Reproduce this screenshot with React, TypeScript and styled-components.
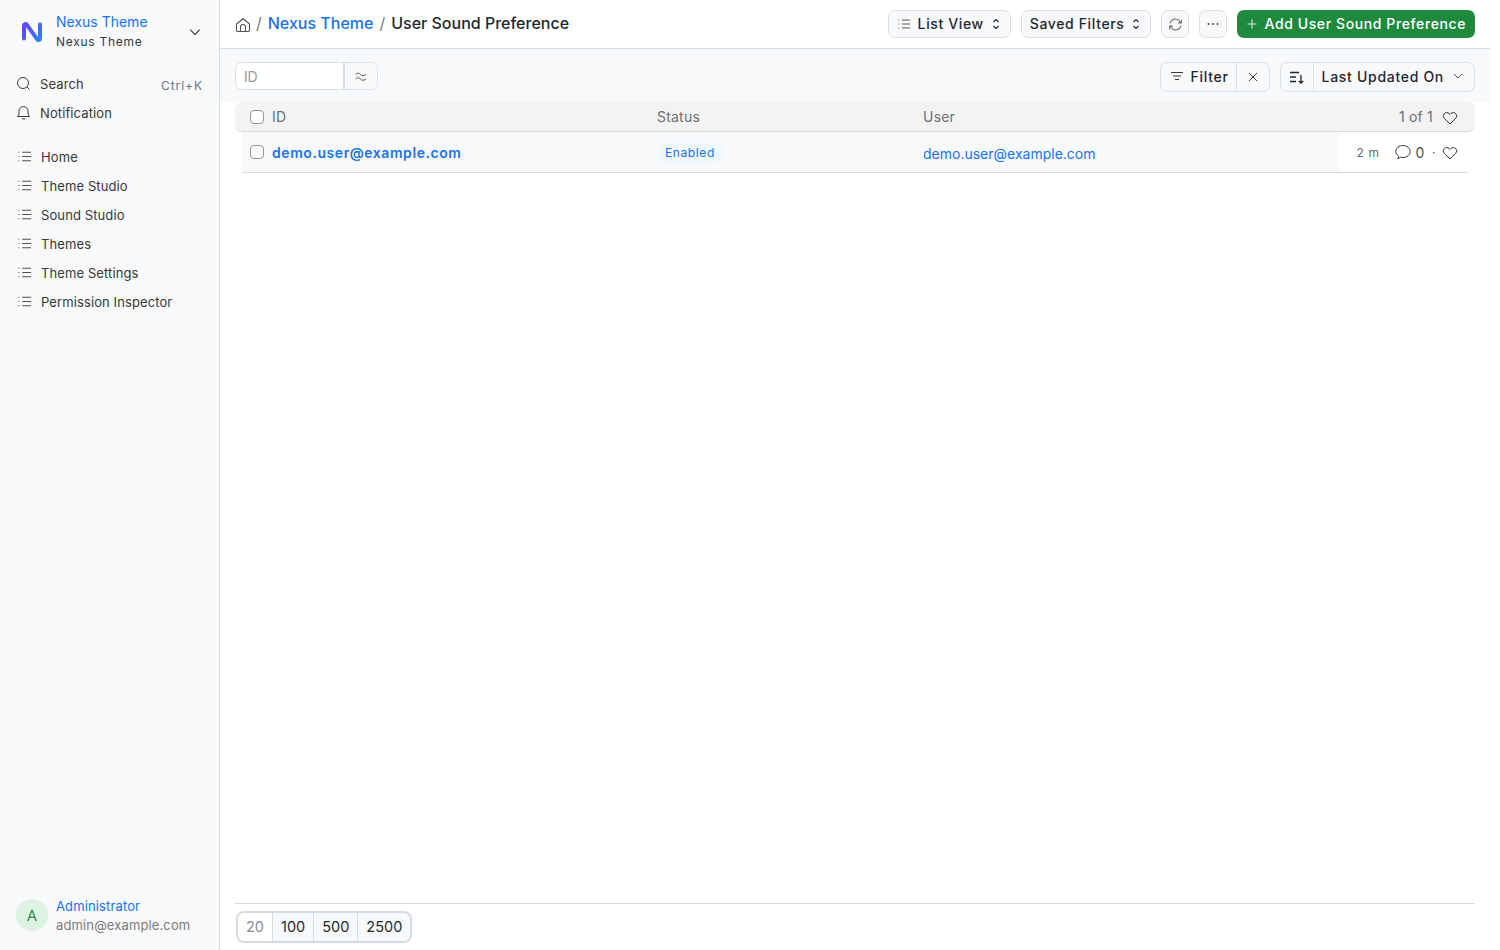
import styled, { createGlobalStyle } from "styled-components";
import { useId } from "react";

const GlobalStyle = createGlobalStyle`
  html, body {
    margin: 0;
    padding: 0;
    background: #fff;
  }
  body {
    font-family: Inter, "Liberation Sans", sans-serif;
    color: #1f272e;
  }
  * { box-sizing: border-box; }
`;

const Layout = styled.div`
  width: 1490px;
  height: 950px;
  display: flex;
  overflow: hidden;
`;

const Sidebar = styled.aside`
  width: 220px;
  flex: none;
  background: #f8f9fb;
  border-right: 1px solid #d4dbe3;
  display: flex;
  flex-direction: column;
  padding: 0 8px;
`;

const Brand = styled.div`
  height: 48px;
  margin-top: 8px;
  padding-left: 12px;
  display: flex;
  align-items: center;
  gap: 12px;
`;

const BrandText = styled.div`
  flex: 1;
  display: flex;
  flex-direction: column;
  gap: 5px;
  margin-bottom: 1px;
`;

const BrandTitle = styled.div`
  font-size: 14px;
  line-height: 16px;
  color: #1a73e8;
`;

const BrandSub = styled.div`
  font-size: 12px;
  line-height: 14px;
  color: #383838;
  letter-spacing: 0.06em;
`;

const Chevron = styled.span`
  display: flex;
  margin-right: 10px;
  color: #383838;
`;

const SideGroup = styled.nav<{ $top: number }>`
  display: flex;
  flex-direction: column;
  margin-top: ${(p) => p.$top}px;
`;

const SideItem = styled.div<{ $tight?: boolean }>`
  height: 29px;
  display: flex;
  align-items: center;
  gap: 9px;
  padding-left: ${(p) => (p.$tight ? "8px" : "9px")};
  padding-right: 8px;
  font-size: 13px;
  letter-spacing: 0.008em;
  color: #383838;
`;

const SideHint = styled.span`
  margin-left: auto;
  font-size: 12px;
  color: #6b7280;
  letter-spacing: 0.08em;
  padding-top: 3px;
`;

const SideFooter = styled.div`
  margin-top: auto;
  height: 50px;
  margin-bottom: 10px;
  display: flex;
  align-items: center;
  gap: 8px;
  padding-left: 8px;
`;

const Avatar = styled.div`
  width: 32px;
  height: 32px;
  border-radius: 50%;
  background: #dcf3e2;
  color: #2c8a5a;
  font-size: 15px;
  display: flex;
  align-items: center;
  justify-content: center;
`;

const UserName = styled.div`
  font-size: 13px;
  line-height: 16px;
  color: #1a73e8;
  letter-spacing: 0.01em;
`;

const UserMail = styled.div`
  font-size: 13px;
  line-height: 16px;
  margin-top: 3px;
  color: #7c7c7c;
  letter-spacing: 0.01em;
`;

const Main = styled.main`
  flex: 1;
  min-width: 0;
  display: flex;
  flex-direction: column;
`;

const Header = styled.header`
  height: 49px;
  flex: none;
  border-bottom: 1px solid #d4dbe3;
  padding: 0 15px;
  display: flex;
  align-items: center;
  gap: 10px;
`;

const Crumbs = styled.div`
  flex: 1;
  display: flex;
  align-items: center;
  gap: 6px;
  font-size: 16px;
  line-height: 20px;
  padding-bottom: 2px;
  font-weight: 500;
  color: #1f272e;
`;

const HomeSlot = styled.span`
  display: flex;
  margin-right: -1px;
  padding-top: 4px;
`;

const CrumbSep = styled.span`
  color: #7c7c7c;
  font-weight: 400;
`;

const CrumbLink = styled.span`
  color: #1a73e8;
`;

const HeadButton = styled.button<{ $square?: boolean }>`
  height: 28px;
  width: ${(p) => (p.$square ? "28px" : "auto")};
  padding: ${(p) => (p.$square ? "0" : "0 10px 1px 8px")};
  background: #f8f9fb;
  border: 1px solid #d9dfe6;
  border-radius: 7px;
  display: flex;
  align-items: center;
  justify-content: center;
  gap: 7px;
  font: 500 14px Inter, sans-serif;
  letter-spacing: 0.045em;
  color: #1f272e;
`;

const ArrowSlot = styled.span`
  display: flex;
  margin-left: 1px;
  padding-top: 1px;
`;

const PrimaryButton = styled.button`
  height: 28px;
  padding: 0 9px 1px;
  background: #1f8a3d;
  border: 0;
  border-radius: 7px;
  display: flex;
  align-items: center;
  gap: 6px;
  font: 500 14px Inter, sans-serif;
  letter-spacing: 0.043em;
  color: #fff;
`;

const Toolbar = styled.div`
  height: 53px;
  flex: none;
  background: #f8f9fb;
  padding: 13px 15px 0;
  display: flex;
  align-items: flex-start;
  gap: 10px;
`;

const IdField = styled.div`
  width: 143px;
  height: 28px;
  display: flex;
  background: #fff;
  border: 1px solid #d9dfe6;
  border-radius: 7px;
  overflow: hidden;
`;

const IdInput = styled.div`
  flex: 1;
  padding-left: 8px;
  line-height: 27px;
  font-size: 14px;
  letter-spacing: -0.02em;
  color: #9a9a9a;
  border-right: 2px solid #d4dbe3;
`;

const IdToggle = styled.div`
  width: 32px;
  background: #f8f9fb;
  display: flex;
  align-items: center;
  justify-content: center;
`;

const Spacer = styled.div`
  flex: 1;
`;

const Group = styled.div`
  height: 30px;
  display: flex;
  align-items: stretch;
  border: 1px solid #d9dfe6;
  border-radius: 7px;
  font-size: 14px;
  font-weight: 500;
  letter-spacing: 0.05em;
  color: #1f272e;
`;

const GroupCell = styled.div<{ $width?: number; $divided?: boolean }>`
  display: flex;
  align-items: center;
  justify-content: center;
  gap: 7px;
  padding: ${(p) => (p.$width ? "0" : "0 7px 2px 9px")};
  width: ${(p) => (p.$width ? `${p.$width}px` : "auto")};
  border-left: ${(p) => (p.$divided ? "1px solid #d9dfe6" : "0")};
`;

const SortLabel = styled(GroupCell)`
  gap: 9px;
  padding: 0 11px 2px 8px;
`;

const TableHead = styled.div`
  height: 30px;
  margin: 0 15px;
  flex: none;
  background: #f3f3f3;
  border-bottom: 1px solid #d4dbe3;
  border-radius: 7px;
  display: grid;
  grid-template-columns: 407px 266px 1fr auto;
  align-items: center;
  padding: 0 17px 0 15px;
  font-size: 14px;
  letter-spacing: 0.015em;
  color: #6f6f6f;
`;

const NameCell = styled.div`
  display: flex;
  align-items: center;
  gap: 8px;
`;

const Check = styled.span`
  width: 14px;
  height: 14px;
  flex: none;
  background: #fff;
  border: 1px solid #8d949c;
  border-radius: 4px;
`;

const TableMeta = styled.div`
  display: flex;
  align-items: center;
  gap: 9px;
`;

const HeartSlot = styled.span`
  display: flex;
  padding-top: 2px;
`;

const Row = styled.div`
  height: 41px;
  margin: 0 22px;
  flex: none;
  border-bottom: 1px solid #d4dbe3;
  display: grid;
  grid-template-columns: 407px 266px 415px 1fr;
  align-items: stretch;
  padding-left: 8px;
  background: linear-gradient(to right, #f8f9fb 1096px, #fff 1096px);
`;

const RowCell = styled.div`
  display: flex;
  align-items: center;
  gap: 8px;
`;

const RowTitle = styled.span`
  font-size: 14px;
  font-weight: 600;
  letter-spacing: 0.04em;
  color: #1a73e8;
`;

const Pill = styled.span`
  height: 20px;
  margin-top: 2px;
  padding: 0 8px;
  border-radius: 10px;
  background: #eff7fe;
  color: #1a73e8;
  font-size: 12px;
  letter-spacing: 0.05em;
  line-height: 20px;
`;

const RowLink = styled.span`
  font-size: 14px;
  color: #1a73e8;
  padding-top: 2px;
`;

const RowMeta = styled.div`
  display: flex;
  align-items: center;
  justify-content: flex-end;
  padding-right: 10px;
  font-size: 12px;
  color: #5f6b7a;
  letter-spacing: 0.05em;
`;

const Count = styled.span`
  display: flex;
  align-items: center;
  gap: 5px;
  margin-left: 15px;
  font-size: 14px;
  color: #525252;
`;

const Dot = styled.span`
  margin: 0 6px 0 7px;
  color: #525252;
`;

const Grow = styled.div`
  flex: 1;
`;

const Footer = styled.footer`
  flex: none;
  height: 47px;
  margin: 0 15px;
  border-top: 1px solid #d4dbe3;
  padding-top: 7px;
`;

const PageSizes = styled.div`
  width: fit-content;
  height: 32px;
  margin-left: 1px;
  display: flex;
  border: 2px solid #d4dbe3;
  border-radius: 8px;
  overflow: hidden;
  background: #f8f9fb;
`;

const PageSize = styled.div<{ $active?: boolean }>`
  padding: 0 8px 2px;
  display: flex;
  align-items: center;
  font-size: 14.5px;
  color: ${(p) => (p.$active ? "#8a8a8a" : "#1f272e")};
  background: ${(p) => (p.$active ? "#fff" : "transparent")};
  & + & {
    border-left: 1px solid #d4dbe3;
  }
`;

function Logo() {
  const id = useId();
  return (
    <svg width="24" height="24" viewBox="0 0 24 24" fill="none">
      <defs>
        <linearGradient id={id} x1="2" y1="4" x2="22" y2="20" gradientUnits="userSpaceOnUse">
          <stop offset="0" stopColor="#6a3df0" />
          <stop offset="1" stopColor="#2a86f5" />
        </linearGradient>
      </defs>
      <path
        d="M4 18.5V5.5c0-1.5 1.8-2 2.7-.9l10.6 14.8c.9 1.1 2.7.6 2.7-.9V4.5"
        stroke={`url(#${id})`}
        strokeWidth="4"
        strokeLinecap="round"
        strokeLinejoin="round"
      />
    </svg>
  );
}

function ListIcon({ size = 16 }: { size?: number }) {
  return (
    <svg width={size} height={size} viewBox="0 0 16 16" fill="none" stroke="#525252" strokeWidth="1.1">
      <path d="M5.5 3.5H15M5.5 8H15M5.5 12.5H15" />
      <path d="M1.5 3.5H3M1.5 8H3M1.5 12.5H3" strokeDasharray="1 .5" />
    </svg>
  );
}

function SearchIcon() {
  return (
    <svg width="15" height="15" viewBox="0 0 15 15" fill="none" stroke="#383838" strokeWidth="1">
      <circle cx="7" cy="7" r="5.5" />
      <path d="M11 11l2.5 2.5" />
    </svg>
  );
}

function BellIcon() {
  return (
    <svg width="15" height="15" viewBox="0 0 15 15" fill="none" stroke="#383838" strokeWidth="1">
      <path d="M1.5 11.5c1-1 1.5-2 1.5-3.5V6a4.5 4.5 0 0 1 9 0v2c0 1.5.5 2.5 1.5 3.5z" strokeLinejoin="round" />
      <path d="M6 13.8h3" />
    </svg>
  );
}

function ChevronDown({ size = 10, color = "#383838" }: { size?: number; color?: string }) {
  return (
    <svg width={size} height={size} viewBox="0 0 10 10" fill="none" stroke={color} strokeWidth="0.9">
      <path d="M1 3l4 4 4-4" />
    </svg>
  );
}

function UpDown() {
  return (
    <svg width="8" height="12" viewBox="0 0 8 12" fill="none" stroke="#1f272e" strokeWidth="1.2">
      <path d="M1.5 4L4 1.5 6.5 4M1.5 8L4 10.5 6.5 8" />
    </svg>
  );
}

function HomeIcon() {
  return (
    <svg width="16" height="16" viewBox="0 0 16 16" fill="none" stroke="#525252" strokeWidth="1.1">
      <path d="M1.5 7L8 1.8 14.5 7v6.2a1.3 1.3 0 0 1-1.3 1.3H2.8a1.3 1.3 0 0 1-1.3-1.3z" strokeLinejoin="round" />
      <path d="M5.5 14.5V10a2.5 2.5 0 0 1 5 0v4.5" />
    </svg>
  );
}

function RefreshIcon() {
  return (
    <svg width="15" height="15" viewBox="0 0 14 14" fill="none" stroke="#6b6b6b" strokeWidth="1">
      <path d="M2 6a5 5 0 0 1 9-2l1 1.5M12 8a5 5 0 0 1-9 2L2 8.5" />
      <path d="M12.5 2.5v3h-3M1.5 11.5v-3h3" />
    </svg>
  );
}

function DotsIcon() {
  return (
    <svg width="14" height="14" viewBox="0 0 14 14" fill="#383838">
      <circle cx="2.5" cy="7" r=".9" />
      <circle cx="7" cy="7" r=".9" />
      <circle cx="11.5" cy="7" r=".9" />
    </svg>
  );
}

function PlusIcon() {
  return (
    <svg width="12" height="12" viewBox="0 0 12 12" fill="none" stroke="#d8f0df" strokeWidth="1.1">
      <path d="M6 1.5v9M1.5 6h9" />
    </svg>
  );
}

function FilterIcon() {
  return (
    <svg width="14" height="14" viewBox="0 0 14 14" fill="none" stroke="#383838" strokeWidth="1">
      <path d="M1 3.5h12M3 7h8M5 10.5h4" />
    </svg>
  );
}

function CloseIcon() {
  return (
    <svg width="12" height="12" viewBox="0 0 12 12" fill="none" stroke="#383838" strokeWidth="1">
      <path d="M2 2l8 8M10 2l-8 8" />
    </svg>
  );
}

function SortIcon() {
  return (
    <svg width="16" height="16" viewBox="0 0 16 16" fill="none" stroke="#1f272e" strokeWidth="1.3">
      <path d="M1 3.5h9M1 8h6M1 12.5h6M12 6v8M9.8 12L12 14.2 14.2 12" />
    </svg>
  );
}

function TildeIcon() {
  return (
    <svg width="14" height="12" viewBox="0 0 14 12" fill="none" stroke="#525252" strokeWidth="1">
      <path d="M1.5 4.5c2-2 3.5-1.5 5 0s3 1.8 5.5 0M1.5 9c2-2 3.5-1.5 5 0s3 1.8 5.5 0" />
    </svg>
  );
}

function HeartIcon() {
  return (
    <svg width="16" height="16" viewBox="0 0 16 16" fill="none" stroke="#383838" strokeWidth="1">
      <path d="M8 14L2.3 8.3a3.4 3.4 0 0 1 0-4.8c1.4-1.3 3.5-1.3 4.8 0l.9.9.9-.9c1.3-1.3 3.4-1.3 4.8 0a3.4 3.4 0 0 1 0 4.8z" strokeLinejoin="round" />
    </svg>
  );
}

function CommentIcon() {
  return (
    <svg width="16" height="16" viewBox="0 0 16 16" fill="none" stroke="#383838" strokeWidth="1">
      <path d="M3.6 12.2C1.9 11 .8 9.4.8 7.5.8 4.2 4 1.5 8 1.5s7.200 2.700 7.200 6-3.200 6-7.200 6c-.8 0-1.600-.1-2.300-.3L2.800 14.800z" strokeLinejoin="round" />
    </svg>
  );
}

const navItems = [
  "Home",
  "Theme Studio",
  "Sound Studio",
  "Themes",
  "Theme Settings",
  "Permission Inspector",
];

const pageSizes = ["20", "100", "500", "2500"];

export default function App() {
  return (
    <Layout>
      <GlobalStyle />
      <Sidebar>
        <Brand>
          <Logo />
          <BrandText>
            <BrandTitle>Nexus Theme</BrandTitle>
            <BrandSub>Nexus Theme</BrandSub>
          </BrandText>
          <Chevron>
            <ChevronDown size={12} />
          </Chevron>
        </Brand>
        <SideGroup $top={13}>
          <SideItem $tight>
            <SearchIcon />
            Search
            <SideHint>Ctrl+K</SideHint>
          </SideItem>
          <SideItem $tight>
            <BellIcon />
            Notification
          </SideItem>
        </SideGroup>
        <SideGroup $top={15}>
          {navItems.map((item) => (
            <SideItem key={item}>
              <ListIcon size={15} />
              {item}
            </SideItem>
          ))}
        </SideGroup>
        <SideFooter>
          <Avatar>A</Avatar>
          <div>
            <UserName>Administrator</UserName>
            <UserMail>admin@example.com</UserMail>
          </div>
        </SideFooter>
      </Sidebar>
      <Main>
        <Header>
          <Crumbs>
            <HomeSlot>
              <HomeIcon />
            </HomeSlot>
            <CrumbSep>/</CrumbSep>
            <CrumbLink>Nexus Theme</CrumbLink>
            <CrumbSep>/</CrumbSep>
            <span>User Sound Preference</span>
          </Crumbs>
          <HeadButton>
            <ListIcon size={14} />
            List View
            <ArrowSlot>
              <UpDown />
            </ArrowSlot>
          </HeadButton>
          <HeadButton>
            Saved Filters
            <ArrowSlot>
              <UpDown />
            </ArrowSlot>
          </HeadButton>
          <HeadButton $square>
            <RefreshIcon />
          </HeadButton>
          <HeadButton $square>
            <DotsIcon />
          </HeadButton>
          <PrimaryButton>
            <PlusIcon />
            Add User Sound Preference
          </PrimaryButton>
        </Header>
        <Toolbar>
          <IdField>
            <IdInput>ID</IdInput>
            <IdToggle>
              <TildeIcon />
            </IdToggle>
          </IdField>
          <Spacer />
          <Group>
            <GroupCell>
              <FilterIcon />
              Filter
            </GroupCell>
            <GroupCell $width={33} $divided>
              <CloseIcon />
            </GroupCell>
          </Group>
          <Group>
            <GroupCell $width={32}>
              <SortIcon />
            </GroupCell>
            <SortLabel $divided>
              Last Updated On
              <ChevronDown />
            </SortLabel>
          </Group>
        </Toolbar>
        <TableHead>
          <NameCell>
            <Check />
            ID
          </NameCell>
          <div>Status</div>
          <div>User</div>
          <TableMeta>
            1 of 1
            <HeartSlot>
              <HeartIcon />
            </HeartSlot>
          </TableMeta>
        </TableHead>
        <Row>
          <RowCell>
            <Check />
            <RowTitle>demo.user@example.com</RowTitle>
          </RowCell>
          <RowCell>
            <Pill>Enabled</Pill>
          </RowCell>
          <RowCell>
            <RowLink>demo.user@example.com</RowLink>
          </RowCell>
          <RowMeta>
            2 m
            <Count>
              <CommentIcon />0
            </Count>
            <Dot>·</Dot>
            <HeartSlot>
              <HeartIcon />
            </HeartSlot>
          </RowMeta>
        </Row>
        <Grow />
        <Footer>
          <PageSizes>
            {pageSizes.map((size, i) => (
              <PageSize key={size} $active={i === 0}>
                {size}
              </PageSize>
            ))}
          </PageSizes>
        </Footer>
      </Main>
    </Layout>
  );
}
